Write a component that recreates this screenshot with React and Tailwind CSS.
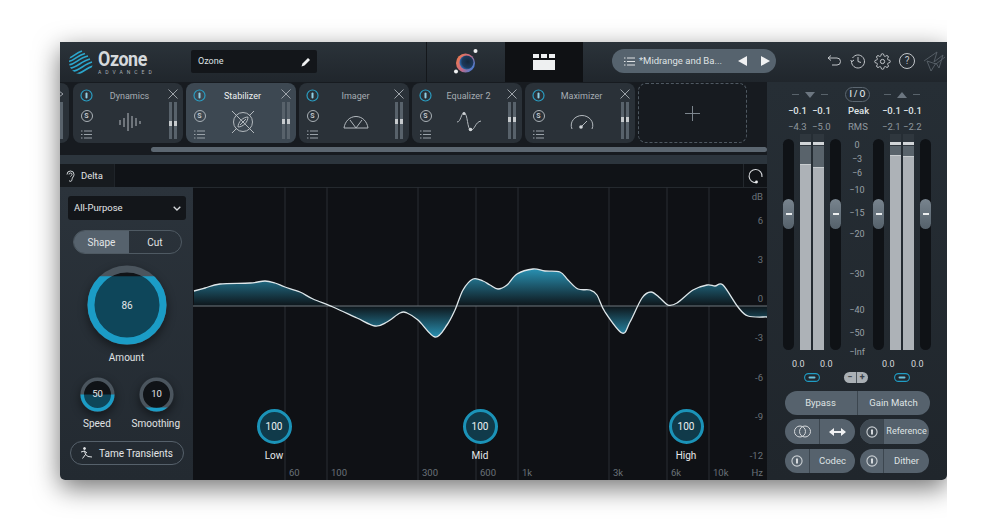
import React from "react";

const pts = [[194,291],[205,288],[220,284],[250,283],[265,281],[275,283],[285,287],[300,292],[313,299],[333,307],[357,318],[375,326],[387,322],[400,313],[407,313],[418,320],[435,337],[447,325],[455,310],[463,290],[473,279],[483,281],[490,285],[498,289],[507,285],[517,274],[533,269],[545,271],[560,272],[568,280],[578,289],[590,290],[597,295],[605,312],[622,333],[630,322],[642,298],[651,292],[660,298],[668,305],[677,303],[693,290],[707,285],[715,286],[723,285],[738,307],[748,316],[767,317]];
function smooth(p) {
  let d = `M${p[0][0]} ${p[0][1]}`;
  for (let i = 0; i < p.length - 1; i++) {
    const a = p[Math.max(i - 1, 0)], b = p[i], c = p[i + 1], e = p[Math.min(i + 2, p.length - 1)];
    d += ` C${(b[0] + (c[0] - a[0]) / 6).toFixed(1)} ${(b[1] + (c[1] - a[1]) / 6).toFixed(1)} ${(c[0] - (e[0] - b[0]) / 6).toFixed(1)} ${(c[1] - (e[1] - b[1]) / 6).toFixed(1)} ${c[0]} ${c[1]}`;
  }
  return d;
}
const curve = smooth(pts);
const gridX = [285, 327, 418, 476, 518, 609, 667, 709];
const freq = [["60", 95], ["100", 137], ["300", 228], ["600", 286], ["1k", 328], ["3k", 419], ["6k", 477], ["10k", 519]];
const dbs = ["6", "3", "0", "-3", "-6", "-9", "-12"];

function Power({ on = true, size = 13 }) {
  return (
    <svg width={size} height={size} viewBox="0 0 13 13" fill="none">
      <circle cx="6.5" cy="6.5" r="5.5" stroke={on ? "#2a9cc0" : "#c9ced2"} strokeWidth="1.2" />
      <rect x="5.5" y="3.5" width="2" height="6" rx="1" fill={on ? "#8fd0e6" : "#e0e3e6"} />
    </svg>
  );
}
function Solo() {
  return (
    <span className="flex h-[12px] w-[12px] items-center justify-center rounded-full border border-[#aab1b7] text-[7px] font-bold leading-none text-[#c3c8cc]">S</span>
  );
}
function ListIcon({ color = "#9aa2a9" }) {
  return (
    <svg width="11" height="9" viewBox="0 0 11 9" stroke={color} strokeWidth="1">
      <path d="M0 1h1.5M3 1h8M0 4.5h1.5M3 4.5h8M0 8h1.5M3 8h8" />
    </svg>
  );
}
function ModIcon({ kind }) {
  const s = { fill: "none", stroke: "#b3b9be", strokeWidth: 1 };
  if (kind === "dyn") return (
    <svg width="24" height="20" viewBox="0 0 24 20" {...s}><path d="M2 8v5M6 6v9M10 1v18M14 4v12M18 6v8M22 9v3" /></svg>
  );
  if (kind === "stab") return (
    <svg width="24" height="24" viewBox="0 0 24 24" {...s}>
      <circle cx="12" cy="12" r="9.5" />
      <path d="M1 1l22 22M23 1L18 6M6 18l-5 5" />
      <path d="M7 17c0-5 5-10 10-10c0 5-5 10-10 10z" />
      <path d="M9 15l6-6" />
    </svg>
  );
  if (kind === "img") return (
    <svg width="26" height="14" viewBox="0 0 26 14" {...s}><path d="M1 13C2 6 7 1.500 13 1.500S24 6 25 13H1zM7 5l6 8 6-8" /></svg>
  );
  if (kind === "eq") return (
    <svg width="26" height="22" viewBox="0 0 26 22" {...s}>
      <path d="M1 11C5 11 5 2 8 2C12 2 11 19 15 19C19 19 19 11 25 10" />
      <circle cx="8" cy="2.500" r="1.500" fill="#d0d4d7" stroke="none" />
      <circle cx="14.500" cy="18.500" r="1.800" fill="#d0d4d7" stroke="none" />
    </svg>
  );
  return (
    <svg width="26" height="16" viewBox="0 0 26 16" {...s}>
      <path d="M3 15C0 8 6 1.500 13 1.500S26 8 23 15" />
      <path d="M12 13l6-6" />
      <circle cx="12" cy="13" r="1.800" fill="#d0d4d7" stroke="none" />
    </svg>
  );
}
function XIcon() {
  return (
    <svg width="10" height="10" viewBox="0 0 10 10" stroke="#a9afb5" strokeWidth="0.9"><path d="M0.500 0.500l9 9M9.500 0.500l-9 9" /></svg>
  );
}
function ModMeter({ t1, t2 }) {
  return (
    <div className="flex h-[37px] gap-[2px]">
      {[t1, t2].map((t, i) => (
        <div key={i} className="relative h-full w-[3px] bg-[#58626b]">
          <div className="absolute left-0 h-[5px] w-[3px] bg-[#c6cacd]" style={{ top: t }} />
        </div>
      ))}
    </div>
  );
}
function Module({ name, kind, active, t1 = 17, t2 = 17 }) {
  return (
    <div className={`flex h-[60px] w-[110px] shrink-0 rounded-lg pl-[6px] pr-[5px] pt-[6px] ${active ? "bg-[#3d4852]" : "bg-[#2a3138]"}`}>
      <div className="flex w-[15px] flex-col items-center gap-[8px] pt-[0px]">
        <Power />
        <Solo />
        <ListIcon />
      </div>
      <div className="mr-[2px] flex flex-1 flex-col items-center">
        <span className={`h-[14px] text-[9px] leading-[14px] ${active ? "text-[#eef0f1]" : "text-[#a6adb3]"}`}>{name}</span>
        <div className="flex flex-1 items-center justify-center pb-[5px] pt-[3px]"><ModIcon kind={kind} /></div>
      </div>
      <div className="flex w-[11px] flex-col items-center gap-[3px]">
        <XIcon />
        <ModMeter t1={t1} t2={t2} />
      </div>
    </div>
  );
}

function Knob({ id, r, sw, level, value, center, fontClass }) {
  const size = (r + sw) * 2;
  const c = size / 2;
  const top = size * (1 - level);
  return (
    <div className="relative rounded-full shadow-[0_4px_10px_rgba(0,0,0,0.45)]" style={{ width: size, height: size }}>
      <svg width={size} height={size} className="block">
        <defs><clipPath id={id}><rect x="0" y={top} width={size} height={size} /></clipPath></defs>
        <circle cx={c} cy={c} r={r} fill="#101317" />
        <circle cx={c} cy={c} r={r + sw / 2 - 0.5} fill="none" stroke="#4b555e" strokeWidth={sw} />
        <g clipPath={`url(#${id})`}>
          <circle cx={c} cy={c} r={r} fill={center} />
          <circle cx={c} cy={c} r={r + sw / 2 - 0.5} fill="none" stroke="#1b9cc6" strokeWidth={sw} />
        </g>
      </svg>
      <span className={`absolute inset-0 flex items-center justify-center text-[#e4e7e9] ${fontClass}`}>{value}</span>
    </div>
  );
}

function Band({ name, left }) {
  return (
    <div className="absolute top-[222px] flex w-[50px] flex-col items-center" style={{ left }}>
      <div className="flex h-[35px] w-[35px] items-center justify-center rounded-full border-[3px] border-[#1b93b8] bg-[#103a4a] text-[10px] text-[#eef0f1]">100</div>
      <span className="mt-[5px] text-[10px] leading-[14px] text-[#e6e8ea]">{name}</span>
    </div>
  );
}

function Fader() {
  return (
    <div className="flex h-[211px] w-[11px] items-start rounded-full bg-[#0f1216] pt-[60px]">
      <div className="flex h-[30px] w-[11px] items-center justify-center rounded-full bg-gradient-to-b from-[#78848e] to-[#55616b]">
        <div className="h-[1.500px] w-[6px] bg-[#eceeef]" />
      </div>
    </div>
  );
}
function Bar({ drop }) {
  return (
    <div className="flex h-[216px] w-[11px] flex-col bg-[#2f373e]">
      <div className="h-[8px]" />
      <div className="h-[3px] bg-[#d2d5d8]" />
      <div className="mt-[1px] bg-[#59636b]" style={{ height: drop }} />
      <div className="flex-1 border-t border-[#c9cdd0] bg-[#adb2b7]" />
    </div>
  );
}
function MeterGroup({ drops }) {
  return (
    <div className="flex items-end gap-[6px]">
      <Fader />
      <div className="flex gap-[2px]"><Bar drop={drops[0]} /><Bar drop={drops[1]} /></div>
      <Fader />
    </div>
  );
}
const scale = [["0", "mt-0"], ["-3", "mt-[2px]"], ["-6", "mt-[2px]"], ["-10", "mt-[5px]"], ["-15", "mt-[11px]"], ["-20", "mt-[9px]"], ["-30", "mt-[28px]"], ["-40", "mt-[24px]"], ["-50", "mt-[11px]"], ["-Inf", "mt-[7px]"]];

function Tri({ down }) {
  return (
    <div className="flex w-[36px] items-center justify-between">
      <div className="h-px w-[7px] bg-[#59636b]" />
      <div className={`h-0 w-0 border-x-[5px] border-x-transparent ${down ? "border-t-[6px] border-t-[#6c7680]" : "border-b-[6px] border-b-[#6c7680]"}`} />
      <div className="h-px w-[7px] bg-[#59636b]" />
    </div>
  );
}
function Link() {
  return (
    <svg width="16" height="9" viewBox="0 0 16 9" fill="none">
      <rect x="0.600" y="0.600" width="14.800" height="7.800" rx="3.900" stroke="#1f9cc4" strokeWidth="1.100" />
      <rect x="4.500" y="3.500" width="7" height="2" rx="1" fill="#6cc3de" />
    </svg>
  );
}

export default function App() {
  return (
    <div className="h-[522px] w-[947px] overflow-hidden bg-white pl-[60px] pt-[42px] font-['Roboto',sans-serif]">
      <div className="flex h-[438px] w-[887px] flex-col overflow-hidden rounded-b-[5px] shadow-[0_8px_26px_rgba(0,0,0,0.55)]">
        {/* top bar */}
        <div className="flex h-[40px] shrink-0 bg-gradient-to-b from-[#2b333a] to-[#20262c]">
          <div className="flex w-[131px] items-center pl-[8px]">
            <svg width="26" height="26" viewBox="0 0 26 26" fill="none" stroke="#2ba6cc" strokeWidth="1.700">
              <defs><clipPath id="logoClip"><circle cx="13" cy="13" r="12" /></clipPath></defs>
              <g clipPath="url(#logoClip)">
                <path d="M-1 9c5 1 8 -5 15 -7" />
                <path d="M-1 12.500c6 1 9 -6 18 -8" />
                <path d="M-1 16c7 1 11 -7 21 -9" />
                <path d="M1 19c7 1 12 -7 21 -9" />
                <path d="M4 22c6 1 12 -7 20 -9" />
                <path d="M8 25c5 0 10 -6 17 -8" />
              </g>
            </svg>
            <div className="ml-[4px] flex flex-col">
              <span className="origin-left scale-x-[0.85] text-[21px] font-bold leading-[20px] tracking-[-0.5px] text-[#d5d9dc]">Ozone</span>
              <span className="text-[5px] leading-[6px] tracking-[4px] text-[#aab1b7]">ADVANCED</span>
            </div>
          </div>
          <div className="mt-[8px] flex h-[23px] w-[126px] items-center justify-between rounded-[2px] bg-[#13161a] pl-[7px] pr-[6px] text-[9px] text-[#dfe2e4]">
            <span>Ozone</span>
            <svg width="10" height="10" viewBox="0 0 10 10"><path d="M0.500 9.500l1-3L7 1l2 2L3.500 8.500z" fill="#f0f1f2" /></svg>
          </div>
          <div className="ml-[109px] flex h-[40px] w-[79px] items-center justify-center border-l border-[#14171b]">
            <svg width="36" height="32" viewBox="0 0 36 32">
              <defs>
                <linearGradient id="orb" x1="0" x2="1" y1="0.200" y2="0.800">
                  <stop offset="0" stopColor="#ee7a4a" />
                  <stop offset="0.500" stopColor="#c86a84" />
                  <stop offset="1" stopColor="#2f7fe0" />
                </linearGradient>
                <radialGradient id="orbIn" cx="0.600" cy="0.450" r="0.600">
                  <stop offset="0" stopColor="#16283a" />
                  <stop offset="0.700" stopColor="#1c3a5c" />
                  <stop offset="1" stopColor="#2f6fb8" />
                </radialGradient>
              </defs>
              <circle cx="17.500" cy="17" r="9.500" fill="url(#orb)" />
              <circle cx="18.500" cy="16.500" r="7" fill="url(#orbIn)" />
              <circle cx="27.500" cy="5" r="2" fill="#f0f1f2" />
              <circle cx="8" cy="25.500" r="2" fill="#f0f1f2" />
            </svg>
          </div>
          <div className="flex h-[40px] w-[78px] flex-col items-center justify-center gap-[2px] bg-[#0f1114]">
            <div className="flex gap-[2px]">
              <div className="h-[4px] w-[6px] bg-[#eef0f1]" />
              <div className="h-[4px] w-[6px] bg-[#eef0f1]" />
              <div className="h-[4px] w-[6px] bg-[#eef0f1]" />
            </div>
            <div className="h-[10px] w-[22px] bg-[#eef0f1]" />
          </div>
          <div className="ml-[29px] mt-[7px] flex h-[24px] w-[164px] items-center rounded-full bg-[#56636e] pl-[12px] pr-[6px] text-[9.500px] text-[#dfe2e4]">
            <ListIcon color="#dfe2e4" />
            <span className="ml-[4px] flex-1 whitespace-nowrap">*Midrange and Ba...</span>
            <div className="mr-[14px] h-0 w-0 border-y-[5px] border-r-[9px] border-y-transparent border-r-[#f0f1f2]" />
            <div className="h-0 w-0 border-y-[5px] border-l-[9px] border-y-transparent border-l-[#f0f1f2]" />
          </div>
          <div className="ml-[51px] flex flex-1 items-center gap-[8px] pb-[2px]">
            <svg width="15" height="15" viewBox="0 0 15 15" fill="none" stroke="#c2c6ca" strokeWidth="1"><path d="M1 4h9a3.500 3.500 0 0 1 0 7H5M1 4l3-2.500M1 4l3 2.500" /></svg>
            <svg width="16" height="16" viewBox="0 0 16 16" fill="none" stroke="#c2c6ca" strokeWidth="1"><path d="M2.500 5a6.500 6.500 0 1 1 -1 3M0.500 7l1.500 1.500L4 7M8 4v4.500l3 1" /></svg>
            <svg width="17" height="17" viewBox="0 0 24 24" fill="none" stroke="#c2c6ca" strokeWidth="1.400"><circle cx="12" cy="12" r="3" /><path d="M19.400 15a1.650 1.650 0 0 0 .33 1.820l.06.06a2 2 0 1 1-2.830 2.830l-.06-.06a1.650 1.650 0 0 0-2.820 1.170V21a2 2 0 1 1-4 0v-.09A1.650 1.650 0 0 0 9 19.400a1.650 1.650 0 0 0-1.820.33l-.06.06a2 2 0 1 1-2.830-2.830l.06-.06a1.650 1.650 0 0 0-1.170-2.820H3a2 2 0 1 1 0-4h.09A1.650 1.650 0 0 0 4.600 9a1.650 1.650 0 0 0-.33-1.820l-.06-.06a2 2 0 1 1 2.830-2.830l.06.06A1.650 1.650 0 0 0 9.920 3.180V3a2 2 0 1 1 4 0v.09a1.650 1.650 0 0 0 2.820 1.170l.06-.06a2 2 0 1 1 2.830 2.830l-.06.06a1.650 1.650 0 0 0 1.170 2.820H21a2 2 0 1 1 0 4h-.09A1.650 1.650 0 0 0 19.400 15z" /></svg>
            <span className="flex h-[16px] w-[16px] items-center justify-center rounded-full border border-[#c2c6ca] text-[10px] leading-none text-[#c2c6ca]">?</span>
            <svg width="24" height="24" viewBox="0 0 24 24" fill="none" stroke="#59626a" strokeWidth="0.900"><path d="M1 12L14 3l-3 10 9-7-4 13-3-5-5 8-4-10 9 3 9-7" /></svg>
          </div>
        </div>

        <div className="flex min-h-0 flex-1">
          <div className="flex w-[707px] flex-col">
            {/* rack */}
            <div className="flex h-[73px] flex-col overflow-hidden bg-[#171b20] pt-[1px]">
              <div className="flex gap-[4px]">
                <div className="flex h-[60px] w-[9px] shrink-0 flex-col items-start gap-[3px] overflow-hidden rounded-r-lg bg-[#2a3138] pt-[6px]">
                  <svg width="4" height="10" viewBox="0 0 4 10" stroke="#a9afb5" strokeWidth="0.9"><path d="M-3 0.500l6 4.500M3 5l-6 4.500" /></svg>
                  <div className="h-[37px] w-[3px] bg-[#58626b]" />
                </div>
                <Module name="Dynamics" kind="dyn" t1={19} t2={19} />
                <div className="-ml-[1px] flex gap-[3px]">
                  <Module name="Stabilizer" kind="stab" active t1={17} t2={17} />
                  <Module name="Imager" kind="img" t1={17} t2={17} />
                  <Module name="Equalizer 2" kind="eq" t1={15} t2={15} />
                  <Module name="Maximizer" kind="max" t1={15} t2={15} />
                  <div className="flex h-[60px] w-[109px] shrink-0 items-center justify-center rounded-lg border border-dashed border-[#4f5962]">
                    <svg width="15" height="15" viewBox="0 0 15 15" stroke="#7c858d"><path d="M7.500 0v15M0 7.500h15" /></svg>
                  </div>
                </div>
              </div>
              <div className="ml-[91px] mt-[4px] h-[5px] rounded-l-full rounded-r-full bg-[#5c6771]" />
            </div>
            <div className="h-[9px] bg-[#2c353d]" />
            {/* delta */}
            <div className="flex h-[23px] items-center justify-between bg-[#101317]">
              <div className="flex h-full w-[55px] items-center gap-[6px] border-r border-[#1f2429] bg-[#171b1f] pl-[6px] pt-[1px] text-[9.500px] text-[#e0e3e5]">
                <svg width="9" height="12" viewBox="0 0 9 12" fill="none" stroke="#d0d4d7"><path d="M1 4.500a3.500 3.500 0 0 1 7 0c0 2-2 3-2 5s-2 2.500-3 1M3 4.500a1.500 1.500 0 0 1 3 0c0 1-1 1-1.500 2" /></svg>
                <span>Delta</span>
              </div>
              <div className="flex h-full w-[24px] items-center justify-center border-l border-[#23282d]">
                <svg width="16" height="16" viewBox="0 0 16 16" fill="none"><path d="M8.500 14.500A6.500 6.500 0 1 1 14 9" stroke="#d5d8db" strokeWidth="1.100" /><circle cx="8.500" cy="14" r="1.400" fill="#eceef0" /></svg>
              </div>
            </div>
            {/* main */}
            <div className="flex min-h-0 flex-1">
              <div className="flex w-[133px] flex-col bg-gradient-to-b from-[#2b333b] to-[#232a31] pt-[9px] text-[10px] text-[#e2e5e7]">
                <div className="ml-[8px] flex h-[24px] w-[118px] items-center justify-between rounded-[3px] bg-[#13161a] pl-[6px] pr-[5px] text-[9.500px]">
                  <span>All-Purpose</span>
                  <svg width="8" height="5" viewBox="0 0 8 5" fill="none" stroke="#d5d8db" strokeWidth="1.300"><path d="M0.700 0.700L4 4l3.300-3.300" /></svg>
                </div>
                <div className="ml-[13px] mt-[10px] flex h-[24px] w-[109px] overflow-hidden rounded-full border border-[#4f5a63]">
                  <div className="flex w-[55px] items-center justify-center bg-[#56626d]">Shape</div>
                  <div className="flex flex-1 items-center justify-center">Cut</div>
                </div>
                <div className="ml-[27px] mt-[11px]">
                  <Knob id="k1" r={33} sw={7} level={0.86} value="86" center="#0e465a" fontClass="text-[10px]" />
                </div>
                <div className="mt-[6px] text-center leading-[14px]">Amount</div>
                <div className="mt-[12px] flex justify-between pl-[20px] pr-[19px]">
                  <Knob id="k2" r={14} sw={3.500} level={0.5} value="50" center="#0e465a" fontClass="text-[9.500px]" />
                  <Knob id="k3" r={14} sw={3.500} level={0.13} value="10" center="#0e465a" fontClass="text-[9.500px]" />
                </div>
                <div className="mt-[5px] flex justify-between pl-[23px] pr-[13px] leading-[14px]">
                  <span>Speed</span><span>Smoothing</span>
                </div>
                <div className="ml-[10px] mt-[10px] flex h-[24px] w-[114px] items-center justify-center gap-[7px] rounded-full border border-[#56616b]">
                  <svg width="11" height="12" viewBox="0 0 11 12" fill="none" stroke="#e2e5e7" strokeWidth="1"><circle cx="3.500" cy="1.500" r="1" fill="#e2e5e7" /><path d="M0 5l3.500-1 1 3.500-3 4M4 7l3 2.500 4 .5M3.500 4L6 6" /></svg>
                  <span>Tame Transients</span>
                </div>
              </div>
              {/* chart */}
              <div className="relative w-[574px] bg-[#0f1115] text-[9.500px] text-[#6a7279]">
                <svg width="574" height="293" viewBox="193 187 574 293" className="absolute inset-0">
                  <defs>
                    <linearGradient id="fill" gradientUnits="userSpaceOnUse" x1="0" x2="0" y1="268" y2="338">
                      <stop offset="0" stopColor="#2a94b6" />
                      <stop offset="0.52" stopColor="#0f1a20" />
                      <stop offset="0.56" stopColor="#0f1a20" />
                      <stop offset="1" stopColor="#2a94b6" />
                    </linearGradient>
                  </defs>
                  <path d="M193 187.500H767" stroke="#24292e" />
                  {gridX.map((x) => <path key={x} d={`M${x} 187V480`} stroke="#2a2f34" />)}
                  <path d={`${curve} L767 306 L194 306 Z`} fill="url(#fill)" />
                  <path d="M193 306H767" stroke="#6f767c" strokeWidth="1.200" />
                  <path d={curve} fill="none" stroke="#dfe7ea" strokeWidth="1.300" />
                </svg>
                <div className="absolute right-[4px] top-[4px] flex h-[274px] flex-col items-end leading-[12px]">
                  <span className="mb-[12px]">dB</span>
                  <div className="flex flex-col items-end gap-[27.170px]">
                    {dbs.map((d) => <span key={d}>{d}</span>)}
                  </div>
                </div>
                {freq.map(([t, l]) => <span key={t} className="absolute top-[280px] leading-[12px]" style={{ left: l + 1 }}>{t}</span>)}
                <span className="absolute right-[4px] top-[280px] leading-[12px]">Hz</span>
                <Band name="Low" left={56} />
                <Band name="Mid" left={262} />
                <Band name="High" left={468} />
              </div>
            </div>
          </div>

          {/* right panel */}
          <div className="flex w-[180px] flex-col items-center bg-gradient-to-b from-[#262e35] to-[#20262c] pt-[5px] text-[9px] text-[#dfe2e4]">
            <div className="flex w-full items-center pl-[25px]">
              <Tri down />
              <span className="ml-[17px] flex h-[15px] w-[25px] items-center justify-center rounded-full border border-[#5c6771] text-[8.500px] font-medium">I / O</span>
              <div className="ml-[14px]"><Tri /></div>
            </div>
            <div className="mt-[3px] flex w-full pl-[21px] text-[9.500px] font-medium leading-[12px]">
              <span className="w-[24px]">−0.1</span><span className="w-[36px]">−0.1</span><span className="w-[34px]">Peak</span><span className="w-[21px]">−0.1</span><span>−0.1</span>
            </div>
            <div className="mt-[4px] flex w-full pl-[21px] text-[9.500px] leading-[12px] text-[#8f979e]">
              <span className="w-[24px]">−4.3</span><span className="w-[36px]">−5.0</span><span className="w-[34px]">RMS</span><span className="w-[21px]">−2.1</span><span>−2.2</span>
            </div>
            <div className="mt-[1px] flex w-full items-end pl-[16px]">
              <MeterGroup drops={[18, 21]} />
              <div className="flex h-[216px] w-[32px] flex-col items-center pt-[5px] leading-[12px] text-[#98a0a6]">
                {scale.map(([t, m]) => <span key={t} className={m}>{t.replace("-", "−")}</span>)}
              </div>
              <MeterGroup drops={[9, 10]} />
            </div>
            <div className="mt-[9px] flex w-full pl-[25px] leading-[11px] text-[#d5d8db]">
              <span className="w-[28px]">0.0</span><span className="w-[62px]">0.0</span><span className="w-[29px]">0.0</span><span>0.0</span>
            </div>
            <div className="mt-[1px] flex h-[12px] w-full items-center pl-[37px]">
              <Link />
              <div className="ml-[24px] flex h-[11px] w-[24px] overflow-hidden rounded-full bg-[#aab0b5] text-[9px] font-bold leading-[11px] text-[#3a434b]">
                <span className="flex-1 border-r border-[#4c555c] text-center">−</span><span className="flex-1 text-center">+</span>
              </div>
              <div className="ml-[26px]"><Link /></div>
            </div>
            <div className="mt-[8px] flex h-[24px] w-[145px] overflow-hidden rounded-full bg-[#56626d] text-center text-[9.500px] leading-[24px]">
              <span className="w-[73px] border-r border-[#3c464f]">Bypass</span><span className="flex-1">Gain Match</span>
            </div>
            <div className="mt-[4px] flex w-[144px] justify-between">
              <div className="flex h-[25px] w-[70px] overflow-hidden rounded-full bg-[#56626d]">
                <div className="flex w-[35px] items-center justify-center border-r border-[#3c464f]">
                  <svg width="17" height="13" viewBox="0 0 17 13" fill="none" stroke="#d5d8db"><circle cx="6" cy="6.500" r="5.500" /><circle cx="11" cy="6.500" r="5.500" /></svg>
                </div>
                <div className="flex flex-1 items-center justify-center">
                  <svg width="17" height="8" viewBox="0 0 17 8" fill="#f0f1f2"><path d="M0 4l5-4v3h7V0l5 4-5 4V5H5v3z" /></svg>
                </div>
              </div>
              <div className="flex h-[25px] w-[69px] overflow-hidden rounded-full bg-[#56626d] text-[9px]">
                <div className="flex w-[24px] items-center justify-center border-r border-[#3c464f] bg-[#3f4952]"><Power on={false} size={12} /></div>
                <div className="flex flex-1 items-center justify-center">Reference</div>
              </div>
            </div>
            <div className="mt-[5px] flex w-[144px] justify-between">
              <div className="flex h-[24px] w-[70px] overflow-hidden rounded-full bg-[#56626d] text-[9.500px]">
                <div className="flex w-[25px] items-center justify-center border-r border-[#3c464f]"><Power on={false} size={12} /></div>
                <div className="flex flex-1 items-center justify-center">Codec</div>
              </div>
              <div className="flex h-[24px] w-[69px] overflow-hidden rounded-full bg-[#56626d] text-[9.500px]">
                <div className="flex w-[24px] items-center justify-center border-r border-[#3c464f]"><Power on={false} size={12} /></div>
                <div className="flex flex-1 items-center justify-center">Dither</div>
              </div>
            </div>
          </div>
        </div>
      </div>
    </div>
  );
}
